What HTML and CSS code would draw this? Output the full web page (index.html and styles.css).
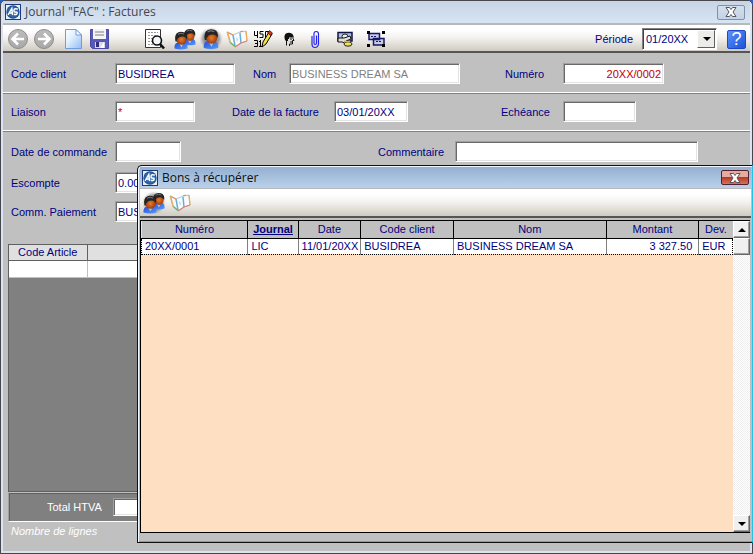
FILE: index.html
```html
<!DOCTYPE html>
<html lang="fr">
<head>
<meta charset="utf-8">
<title>Journal "FAC" : Factures</title>
<link rel="stylesheet" href="styles.css">
</head>
<body>
<svg class="defs" aria-hidden="true">
  <defs>
    <radialGradient id="g-face"><stop offset="0" stop-color="#e87c2e"/><stop offset="1" stop-color="#a03c0a"/></radialGradient>
    <radialGradient id="g-logo"><stop offset="0" stop-color="#5b93cc"/><stop offset="1" stop-color="#1b4f94"/></radialGradient>
    <radialGradient id="g-shadow"><stop offset="0.3" stop-color="#666"/><stop offset="0.7" stop-color="#999" stop-opacity=".8"/><stop offset="1" stop-color="#ccc" stop-opacity="0"/></radialGradient>
    <linearGradient id="g-ball" x1="0" y1="0" x2="0" y2="1"><stop offset="0" stop-color="#bcbcbc"/><stop offset="1" stop-color="#a8a8a8"/></linearGradient>
    <linearGradient id="g-page" x1="0" y1="0" x2="1" y2="1"><stop offset="0" stop-color="#fff"/><stop offset=".4" stop-color="#e2f0ff"/><stop offset="1" stop-color="#8dbcf5"/></linearGradient>
    <linearGradient id="g-body" x1="0" y1="0" x2="1" y2="1"><stop offset="0" stop-color="#1f50d8"/><stop offset="1" stop-color="#5c9af5"/></linearGradient>
  </defs>
  <symbol id="logo" viewBox="0 0 16 16">
    <rect width="16" height="16" fill="#20397c"/><rect x="1" y="1" width="14" height="14" fill="#e8f0f8"/>
    <circle cx="8" cy="8" r="6.7" fill="url(#g-logo)"/>
    <path d="M3 11 6.8 4.5 7.6 11M4.5 9H7.4M13 5.2Q9.4 3.8 9 6.2T12 8.2Q13 10.8 9 10.5" fill="none" stroke="#fff" stroke-width="1.4"/>
  </symbol>
  <symbol id="person" viewBox="0 0 14 18">
    <path d="M.5 17Q0 11.500 4 11H10Q14 12 13.500 17Q7 19 .5 17Z" fill="url(#g-body)"/>
    <path d="M5 12H9.500L7.500 16Z" fill="#9cc6ff"/>
    <ellipse cx="7.500" cy="8" rx="5" ry="5.300" fill="url(#g-face)"/>
    <path d="M1.500 10Q-.5 1 7 .3Q14.500 .5 13 8L12 6.500Q10.500 4.500 8.500 5Q5 5 4 7Q2.500 8 3 10Z" fill="#242424"/>
    <path d="M4 2.700Q7 .8 10 2.600" fill="none" stroke="#777" stroke-width="1"/>
  </symbol>
  <symbol id="people" viewBox="0 0 24 24">
    <use href="#person" x="10" y="1" width="13" height="18"/>
    <use href="#person" x="1" y="4" width="14" height="19"/>
  </symbol>
  <symbol id="map" viewBox="0 0 24 24">
    <path d="M2 5 8 8 15 5 21 4 22 14 16 16 10 20 5 16Z" fill="#f8fcff" stroke="#a9c8dc"/>
    <path d="M8 8 10 19M15 6 16 16" stroke="#67addb" stroke-width="1.500"/>
    <path d="M2 5 8 8M15 5 18 4" stroke="#f18b4d" stroke-width="1.300"/>
    <path d="M2.500 5 5.500 16M21 4 22 14" stroke="#e9ac54" stroke-width="1.300"/>
    <path d="M5.500 15.500 10 19.500" stroke="#66b85a" stroke-width="1.300"/>
    <path d="M10 20 16 16 22 14" fill="none" stroke="#e67b70" stroke-width="1.200"/>
    <path d="M10.500 10 13.500 12 12 15" fill="#bce2f4"/>
  </symbol>
  <symbol id="cross" viewBox="0 0 12 10">
    <path d="M1 .5H4.500L6 2.500 7.500 .5H11L8 5 11 9.500H7.500L6 7.500 4.500 9.500H1L4 5Z" fill="#fff" stroke="#53565f"/>
  </symbol>
</svg>

<main class="window">
  <header class="titlebar">
    <svg class="logo"><use href="#logo"/></svg>
    <h1>Journal "FAC" : Factures</h1>
    <button class="close" aria-label="Fermer"><svg><use href="#cross"/></svg></button>
  </header>

  <div class="toolbar">
    <div class="tools">
      <button aria-label="Précédent"><svg viewBox="0 0 24 24"><circle cx="12" cy="12" r="9.500" fill="url(#g-ball)" stroke="#8c8c8c"/><path d="M18 12H7M12 6.500 6.500 12 12 17.500" fill="none" stroke="#fff" stroke-width="2.600"/></svg></button>
      <button aria-label="Suivant"><svg viewBox="0 0 24 24"><circle cx="12" cy="12" r="9.500" fill="url(#g-ball)" stroke="#8c8c8c"/><path d="M6 12H17M12 6.500 17.500 12 12 17.500" fill="none" stroke="#fff" stroke-width="2.600"/></svg></button>
    </div>
    <div class="tools tools-file">
      <button aria-label="Nouveau"><svg viewBox="0 0 24 24"><path d="M4.500 2.500H15L20.500 8V21.500H4.500Z" fill="url(#g-page)" stroke="#6d9ddb"/><path d="M15 2.500V8H20.500Z" fill="#fff" stroke="#6d9ddb"/></svg></button>
      <button aria-label="Enregistrer"><svg viewBox="0 0 24 24"><path d="M3.500 2.500H21.500V21.500H5.500L3.500 19.500Z" fill="#5959b9" stroke="#4a4aa4"/><path d="M6 2H19V12H6Z" fill="#f4f4f4"/><path d="M8 5H17M8 8H17" stroke="#a7a7a7" stroke-width="1.500"/><path d="M8 15H18V21H8Z" fill="#d7d7e6"/><path d="M9 15H12V20H9Z" fill="#30307a"/><path d="M13 21 17 15V21Z" fill="#fff"/></svg></button>
    </div>
    <div class="tools tools-preview">
      <button aria-label="Aperçu"><svg viewBox="0 0 24 24"><path d="M2.500 2.500H17.500V20.500H2.500Z" fill="#fff" stroke="#333"/><path d="M5 5.500H15M5 8.500H13M5 11.500H9M5 14.500H9M5 17.500H10" stroke="#999" stroke-dasharray="2 1"/><circle cx="14" cy="13.500" r="4.500" fill="#f2f7f7" stroke="#111" stroke-width="1.600"/><path d="M17 17 21 21.500" stroke="#111" stroke-width="2.600"/></svg></button>
    </div>
    <div class="tools tools-data">
      <button aria-label="Clients"><svg><use href="#people"/></svg></button>
      <button aria-label="Client"><svg viewBox="0 0 24 24"><circle cx="12" cy="12" r="12" fill="url(#g-shadow)"/><use href="#person" x="4" y="2" width="16" height="20"/></svg></button>
      <button aria-label="Plan"><svg><use href="#map"/></svg></button>
      <button aria-label="Saisie"><svg viewBox="0 0 24 24"><path d="M3.500 4V8.500H7M6.500 4V11M12.500 4.500H9V7H12V10.500H8.500M14.500 11V4.500H18M3 13.500H6.500V19.500H3M4 16.500H6.500M9.500 13V20M8 14.500H9.500M8 19.500H11.500" fill="none" stroke="#000"/><path d="M18 5 21 7 15 17 11 20 12 15Z" fill="#f1df43" stroke="#000"/><path d="M16.500 6 18.500 3.500 21.500 6 20 8.500Z" fill="#d83127" stroke="#000" stroke-width=".6"/></svg></button>
      <button aria-label="Contact"><svg viewBox="0 0 24 24"><path d="M9.500 10H14.500V12L16 14H15V16.500H12V18.500H9.500V15L8 12Z" fill="#ddd"/><path d="M8 13Q6.500 8 9 6.500Q12 5 15.500 7L16.500 9 15 10.500H12V12H11V14H9Z" fill="#111"/><path d="M16 9V11.500L17 13.500H15.500V17H12.500V19M9.500 14V18.500M14 11V13M13 15H15" fill="none" stroke="#111"/></svg></button>
      <button aria-label="Pièce jointe"><svg viewBox="0 0 24 24"><path d="M9 9V17Q9 20.500 12 20.500T15.500 17V7Q15.500 4.500 13.200 4.500T11 7V16Q11 17.500 12.200 17.500T13.500 16V8.500" fill="none" stroke="#2424ee" stroke-width="1.200"/></svg></button>
    </div>
    <div class="tools tools-links">
      <button aria-label="Paiement"><svg viewBox="0 0 24 24"><path d="M5 5.500H19V14H5Z" fill="#a8c2e2" stroke="#12124d" stroke-width="1.500"/><ellipse cx="12" cy="9.500" rx="3" ry="2.500" fill="#eee" stroke="#222"/><path d="M5 11H11L17 9 18 12 13 14 14 17 9 15H5Z" fill="#ddd" stroke="#111"/><ellipse cx="15" cy="17" rx="4" ry="2.200" fill="#efe15a" stroke="#222"/><path d="M11 14.500H17" stroke="#c9b834" stroke-width="1.500"/></svg></button>
      <button aria-label="Liaisons"><svg viewBox="0 0 24 24"><path d="M5 6.500H15.500V12.500H5ZM9.500 11.500H20V18H9.500Z" fill="#c7cbe5" stroke="#171768" stroke-width="1.500"/><path d="M7 9.500H13M12 14.500H17.500" stroke="#171768" stroke-dasharray="2 1"/><path d="M3 4H6V7H3ZM18 4H21V7H18ZM3 17H6V20H3ZM18 17H21V20H18Z" fill="#000"/></svg></button>
    </div>
    <label class="period-label" for="periode">Période</label>
    <span class="combo"><select id="periode"><option>01/20XX</option></select></span>
    <button class="help" aria-label="Aide">?</button>
  </div>

  <form class="form">
    <div class="row row-client">
      <label for="code">Code client</label><input id="code" value="BUSIDREA">
      <label for="nom">Nom</label><input id="nom" class="muted" value="BUSINESS DREAM SA" readonly>
      <label for="numero">Numéro</label><input id="numero" class="number" value="20XX/0002">
    </div>
    <div class="row row-dates">
      <label for="liaison">Liaison</label><input id="liaison" class="star" value="*">
      <label for="date">Date de la facture</label><input id="date" value="03/01/20XX">
      <label for="echeance">Echéance</label><input id="echeance">
    </div>
    <div class="row row-order">
      <label for="commande">Date de commande</label><input id="commande">
      <label for="commentaire">Commentaire</label><input id="commentaire">
    </div>
    <div class="row row-single">
      <label for="escompte">Escompte</label><input id="escompte" value="0.00">
    </div>
    <div class="row row-single">
      <label for="paiement">Comm. Paiement</label><input id="paiement" value="BUS">
    </div>
  </form>

  <section class="articles">
    <table>
      <thead><tr><th class="col-article">Code Article</th><th></th></tr></thead>
      <tbody><tr><td></td><td></td></tr></tbody>
    </table>
  </section>
  <div class="totals"><label for="total">Total HTVA</label><input id="total"></div>
  <footer class="status">Nombre de lignes</footer>
</main>

<section class="dialog" role="dialog" aria-labelledby="dialog-title">
  <header class="titlebar dialog-titlebar">
    <svg class="logo"><use href="#logo"/></svg>
    <h2 id="dialog-title">Bons à récupérer</h2>
    <button class="close close-red" aria-label="Fermer"><svg><use href="#cross"/></svg></button>
  </header>
  <div class="toolbar dialog-toolbar">
    <div class="tools">
      <button aria-label="Clients"><svg viewBox="0 0 24 24"><circle cx="12" cy="12" r="12" fill="url(#g-shadow)"/><use href="#people"/></svg></button>
      <button aria-label="Plan"><svg><use href="#map"/></svg></button>
    </div>
  </div>
  <div class="list">
    <div class="list-body">
      <table>
        <colgroup><col class="c-numero"><col class="c-journal"><col class="c-date"><col class="c-code"><col class="c-nom"><col class="c-montant"><col class="c-dev"></colgroup>
        <thead><tr><th>Numéro</th><th class="sorted">Journal</th><th>Date</th><th>Code client</th><th>Nom</th><th>Montant</th><th>Dev.</th></tr></thead>
        <tbody><tr><td>20XX/0001</td><td>LIC</td><td>11/01/20XX</td><td>BUSIDREA</td><td>BUSINESS DREAM SA</td><td class="amount">3 327.50</td><td>EUR</td></tr></tbody>
      </table>
    </div>
    <div class="scrollbar">
      <button aria-label="Monter"><svg viewBox="0 0 8 4"><path d="M0 4 4 0 8 4Z"/></svg></button>
      <div class="thumb"></div>
      <div class="track"></div>
      <button aria-label="Descendre"><svg viewBox="0 0 8 4"><path d="M0 0H8L4 4Z"/></svg></button>
    </div>
  </div>
</section>
</body>
</html>
```
FILE: styles.css
```css
* { box-sizing: border-box; }

body {
  margin: 0;
  position: relative;
  min-height: 100vh;
  display: flex;
  background: #2a5fc4;
  color: #000080;
  font: 11px/14px "Liberation Sans", Arial, sans-serif;
}

.defs { position: absolute; width: 0; height: 0; }
button, input, select { font: inherit; color: inherit; margin: 0; padding: 0; }
button { display: flex; align-items: center; justify-content: center; border: 0; background: none; }

.window {
  flex: 1;
  display: flex;
  flex-direction: column;
  background: #c0c0c0;
  border: 1px solid #46464c;
  border-radius: 5px 5px 0 0;
  box-shadow: inset 0 0 0 2px #d9e3f2;
  padding: 0 2px 2px;
  overflow: hidden;
}

/* Title bars */
.titlebar {
  display: flex;
  align-items: center;
  gap: 4px;
  height: 24px;
  padding: 0 5px 0 2px;
  border-bottom: 2px solid #b8b8b8;
  background: linear-gradient(#c6d4e4, #d8e4f2);
}
.titlebar h1, .titlebar h2 {
  flex: 1;
  margin: 0;
  font: 12px/18px "Open Sans", "Noto Sans", sans-serif;
  color: #404652;
}
.titlebar h2 { color: #101010; }
.logo { width: 16px; height: 16px; }
.close {
  width: 28px;
  height: 15px;
  border: 1px solid #8190a5;
  border-radius: 2px;
  background: linear-gradient(#d3dfed, #c3d2e4);
}
.close svg { width: 12px; height: 10px; }
.close-red {
  border-color: #55202a;
  background: linear-gradient(#e5aaa0 0 45%, #b83a25 50%, #d4735c);
}

/* Toolbars */
.toolbar {
  display: flex;
  align-items: center;
  height: 28px;
  padding: 2px 4px 0 3px;
  background: linear-gradient(#fff 20%, #f3f1ee 50%, #cfcbc2);
  border-bottom: 2px solid #555;
}
.tools { display: flex; gap: 2px; }
.tools button, .tools svg { width: 24px; height: 24px; }
.tools-file { margin-left: 5px; }
.tools-preview { margin-left: 32px; }
.tools-data { margin-left: 6px; }
.tools-links { margin-left: 6px; gap: 7px; }
.period-label { margin-left: auto; margin-right: 9px; }

.combo {
  position: relative;
  width: 75px;
  height: 22px;
  margin-right: 10px;
}
.combo select {
  width: 100%;
  height: 100%;
  padding-left: 3px;
  appearance: none;
  background: #fff;
  border: 1px solid;
  border-color: #808080 #fff #fff #808080;
  border-radius: 0;
  box-shadow: inset 1px 1px #404040;
}
.combo::before, .combo::after { content: ""; position: absolute; pointer-events: none; }
.combo::before {
  top: 2px;
  right: 2px;
  bottom: 2px;
  width: 16px;
  background: #ececea;
  border: 1px solid;
  border-color: #fff #606060 #606060 #fff;
}
.combo::after {
  top: 9px;
  right: 6px;
  border: 4px solid transparent;
  border-top-color: #000;
  border-bottom: 0;
}
.help {
  width: 19px;
  height: 19px;
  border: 1px solid #1a48c8;
  border-radius: 2px;
  background: linear-gradient(135deg, #5c92fa, #1d52dc);
  color: #fff;
  font: 18px/17px "Liberation Sans", Arial, sans-serif;
}

/* Invoice form */
.row {
  display: grid;
  align-items: center;
  padding: 0 8px;
}
.row-client {
  height: 40px;
  padding-top: 2px;
  grid-template-columns: 104px 120px 54px 171px 103px 101px;
  border-bottom: 1px solid #fff;
}
.row-dates {
  height: 38px;
  padding-bottom: 1px;
  grid-template-columns: 104px 80px 139px 74px 155px 73px;
  border-top: 1px solid #808080;
  border-bottom: 1px solid #fff;
}
.row-order {
  height: 37px;
  padding-top: 3px;
  grid-template-columns: 104px 66px 274px 243px;
  border-top: 1px solid #808080;
}
.row-single { height: 29px; grid-template-columns: 104px 66px; }
.row-client label:nth-of-type(2) { padding-left: 18px; }
.row-client label:nth-of-type(3) { padding-left: 45px; }
.row-dates label:nth-of-type(2) { padding-left: 37px; }
.row-dates label:nth-of-type(3) { padding-left: 93px; }
.row-order label:nth-of-type(2) { padding-left: 197px; }

input {
  width: 100%;
  height: 21px;
  padding: 0 2px;
  background: #fff;
  border: 1px solid;
  border-color: #a0a0a0 #fff #fff #a0a0a0;
  box-shadow: inset 1px 1px #696969, inset -1px -1px #e3e3e3;
  border-radius: 0;
}
.muted { color: #808080; }
.number { color: #c00000; text-align: right; }
.star { color: #c00000; }

/* Article lines */
table { width: 100%; border-collapse: collapse; table-layout: fixed; }
th { font-weight: normal; padding: 0; }
td { padding: 0 3px; white-space: nowrap; }
.articles {
  flex: 1;
  margin: 18px 5px 0;
  background: #808080;
  border: 1px solid #606060;
}
.articles th { height: 15px; background: #e0e0e0; border: 1px solid #606060; border-width: 0 1px 1px 0; }
.articles td { height: 17px; background: #fff; border: 1px solid #c0c0c0; border-width: 0 1px 1px 0; }
.articles .col-article { width: 78px; }
.totals {
  display: grid;
  grid-template-columns: 66px 100px;
  align-items: center;
  height: 30px;
  margin: 0 5px;
  padding-left: 38px;
  background: #808080;
  color: #fff;
  border: 1px solid;
  border-color: #c0c0c0 #fff #fff #a0a0a0;
  box-shadow: inset 1px 1px #606060;
}
.totals input { height: 18px; }
.status { height: 29px; padding: 2px 8px; color: #fff; font-style: italic; }

/* Overlaid dialog */
.dialog {
  position: absolute;
  top: 165px;
  right: 0;
  bottom: 11px;
  left: 137px;
  display: flex;
  flex-direction: column;
  background: #c0c0c0;
  border: 1px solid #111;
  border-right-color: #22c3e6;
  border-radius: 5px 0 0 0;
  box-shadow: inset 1px 1px #f2f7ff, inset 0 -1px #22c3e6;
  padding: 1px 1px 9px 2px;
  overflow: hidden;
}
.dialog-titlebar {
  height: 22px;
  padding: 0 2px;
  border-bottom-width: 1px;
  background: linear-gradient(#94b0d0, #b9d1eb);
}
.dialog-toolbar { height: 29px; padding: 0 2px; margin-bottom: 2px; }
.list { flex: 1; display: flex; margin-right: 1px; border: 1px solid #000; border-right: 0; }
.list-body { flex: 1; background: #ffdfc1; }
.list th {
  height: 17px;
  background: #c0c0c0;
  border: 1px solid #000;
  border-width: 0 1px 1px 0;
}
.list th:last-child { border-right: 0; }
.list td {
  height: 16px;
  background: #fff;
  border: 1px dotted #000;
  border-right: 1px solid #808080;
}
.list td:last-child { border-right: 1px dotted #000; }
.list .sorted { font-weight: bold; text-decoration: underline; }
.list .amount { text-align: right; padding-right: 6px; }
.c-numero { width: 18%; }
.c-journal { width: 8.5%; }
.c-date { width: 10.6%; }
.c-code { width: 15.7%; }
.c-nom { width: 25.8%; }
.c-montant { width: 15.7%; }

.scrollbar { display: flex; flex-direction: column; width: 17px; }
.scrollbar button, .thumb {
  width: 100%;
  height: 17px;
  background: #f0f0f0;
  border: 1px solid;
  border-color: #fff #696969 #696969 #fff;
  box-shadow: inset -1px -1px #a0a0a0;
}
.scrollbar svg { width: 8px; height: 4px; }
.track { flex: 1; background: repeating-conic-gradient(#fff 0 25%, #eee 0 50%) 0 0 / 2px 2px; }
```
